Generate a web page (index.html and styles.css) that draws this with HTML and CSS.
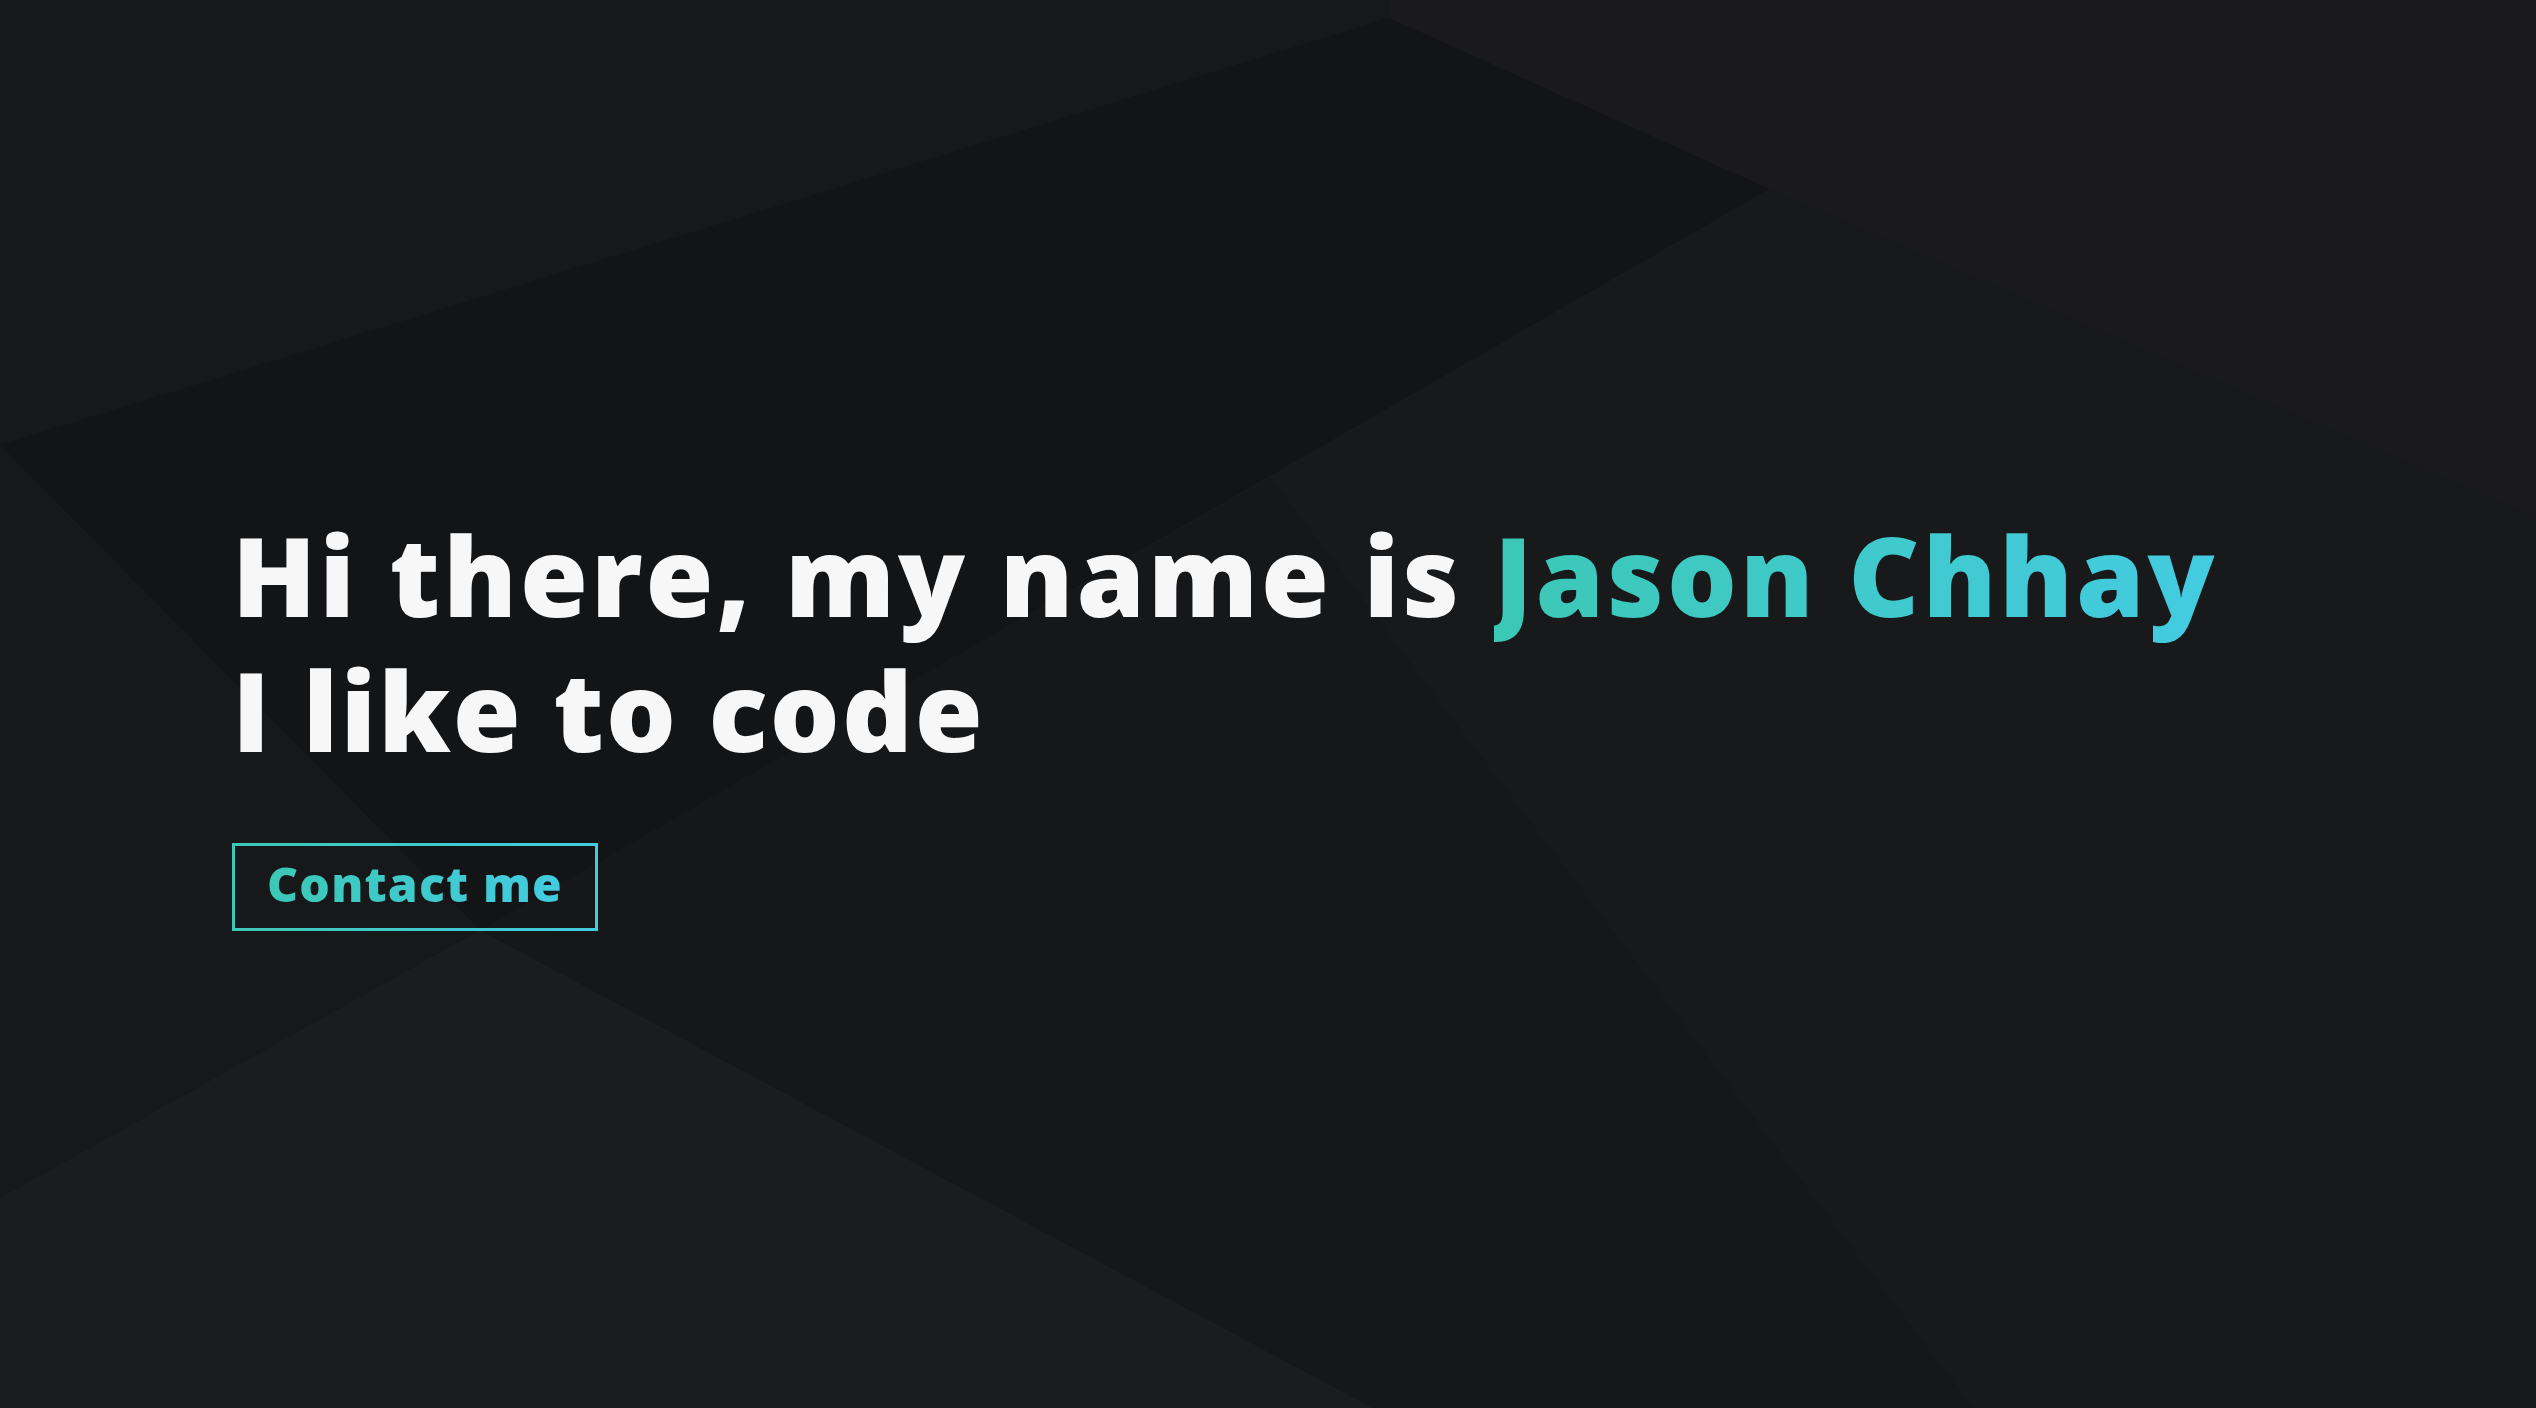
FILE: index.html
```html
<!DOCTYPE html>
<html lang="en">
<head>
<meta charset="utf-8">
<title>Jason Chhay</title>
<link rel="stylesheet" href="styles.css">
</head>
<body>
<div class="page">
  <svg class="backdrop" viewBox="0 0 2536 1408" preserveAspectRatio="none" aria-hidden="true">
    <rect x="0" y="0" width="2536" height="1408" fill="#18191b"/>
    <polygon points="0,0 1389,0 1389,18 0,445" fill="#17181a"/>
    <polygon points="1389,0 2536,0 2536,517 1769,189 1389,18" fill="#1a1a1c"/>
    <polygon points="0,445 1389,18 1769,189 480,930" fill="#131416"/>
    <polygon points="0,445 480,930 0,1198" fill="#17181a"/>
    <polygon points="0,1198 480,930 1373,1408 0,1408" fill="#1b1c1e"/>
    <polygon points="480,930 1271,478 1973,1408 1373,1408" fill="#161719"/>
  </svg>
  <main class="hero">
    <h1 class="headline"><span class="line">Hi there, my name is <span class="accent">Jason Chhay</span></span><span class="line line-second">I like to code</span></h1>
    <a class="contact-btn" href="#contact"><span class="accent">Contact me</span></a>
  </main>
</div>
</body>
</html>
```

FILE: styles.css
```css
* { box-sizing: border-box; }

html, body {
  margin: 0;
  padding: 0;
  height: 100%;
}

body {
  background: #18191b;
  font-family: "Open Sans", "Lato", "Liberation Sans", sans-serif;
  overflow: hidden;
}

.page {
  position: relative;
  width: 100%;
  height: 100vh;
}

.backdrop {
  position: absolute;
  inset: 0;
  width: 100%;
  height: 100%;
  display: block;
}

.hero {
  position: relative;
  display: flex;
  flex-direction: column;
  align-items: flex-start;
  padding: 507px 0 0 232px;
}

.headline {
  margin: 0;
  display: flex;
  flex-direction: column;
  color: #f7f7f7;
  font-weight: 800;
  font-size: 110px;
  line-height: 135px;
  letter-spacing: 3px;
}

.line {
  display: block;
  white-space: nowrap;
}

.line-second {
  letter-spacing: 2px;
}

.accent {
  background: linear-gradient(90deg, #3cc8b6 0%, #43cbe1 100%);
  -webkit-background-clip: text;
  background-clip: text;
  color: transparent;
}

.contact-btn {
  margin-top: 66px;
  display: inline-block;
  width: 366px;
  text-align: center;
  padding: 14px 0 20px;
  font-size: 48px;
  line-height: 48px;
  font-weight: 800;
  letter-spacing: 1.2px;
  text-decoration: none;
  border: 3px solid;
  border-image: linear-gradient(90deg, #3cc8b6, #43cbe1) 1;
}
```
